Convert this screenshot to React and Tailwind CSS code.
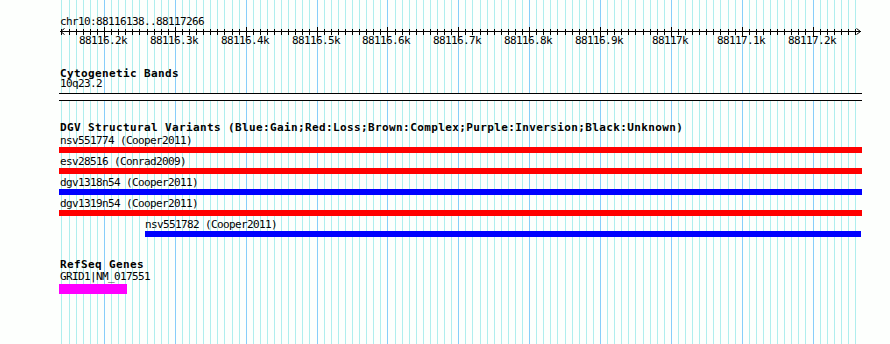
import React from "react";

const SCALE = 0.708571;
const col = (p) => Math.round(104 + (p - 88116200) * SCALE);

const gridPositions = [];
for (let p = 88116140; p <= 88117260; p += 10) gridPositions.push(p);

const majorLabels = [
  [88116200, "88116.2k"],
  [88116300, "88116.3k"],
  [88116400, "88116.4k"],
  [88116500, "88116.5k"],
  [88116600, "88116.6k"],
  [88116700, "88116.7k"],
  [88116800, "88116.8k"],
  [88116900, "88116.9k"],
  [88117000, "88117k"],
  [88117100, "88117.1k"],
  [88117200, "88117.2k"],
];

const MONO = "font-['DejaVu_Sans_Mono','Liberation_Mono',monospace]";

function Grid() {
  return (
    <svg
      className="absolute inset-0"
      width="890"
      height="344"
      viewBox="0 0 890 344"
      shapeRendering="crispEdges"
    >
      {gridPositions.map((p) => {
        const x = col(p) + 0.5;
        const major = p % 100 === 0;
        return (
          <line
            key={p}
            x1={x}
            x2={x}
            y1={0}
            y2={344}
            stroke={major ? "#87cefa" : "#afeeee"}
            strokeWidth="1"
          />
        );
      })}
    </svg>
  );
}

function Ruler() {
  // svg top is at page y=27
  return (
    <svg width="890" height="20" viewBox="0 0 890 20" className="block">
      <g shapeRendering="crispEdges" stroke="#000" strokeWidth="1">
        <line x1="60" x2="861" y1="4.5" y2="4.5" />
        {gridPositions.map((p) => {
          const x = col(p) + 0.5;
          const major = p % 100 === 0;
          return (
            <line
              key={p}
              x1={x}
              x2={x}
              y1={major ? 0 : 2}
              y2={major ? 10 : 8}
            />
          );
        })}
      </g>
      <g stroke="#000" strokeWidth="1" fill="none">
        <polyline points="64.5,1.5 60.5,4.5 64.5,7.5" />
        <polyline points="856.5,1.5 860.5,4.5 856.5,7.5" />
      </g>
      {majorLabels.map(([p, t]) => (
        <text
          key={p}
          x={col(p) - 1}
          y="16.8"
          textAnchor="middle"
          fontFamily="'DejaVu Sans Mono','Liberation Mono',monospace"
          fontSize="11"
          letterSpacing="-0.62"
          fill="#000"
        >
          {t}
        </text>
      ))}
    </svg>
  );
}

function Label({ children, className = "", bold = false }) {
  return (
    <div
      className={`relative z-10 h-[9px] leading-[9px] text-[11px] whitespace-nowrap text-black ${MONO} ${
        bold ? "font-bold tracking-[0.38px]" : "tracking-[-0.62px]"
      } ${className}`}
    >
      {children}
    </div>
  );
}

const variants = [
  { name: "nsv551774 (Cooper2011)", color: "bg-[#ff0000]", ml: "ml-[59px]", w: "w-[803px]", pl: "pl-[60px]" },
  { name: "esv28516 (Conrad2009)", color: "bg-[#ff0000]", ml: "ml-[59px]", w: "w-[803px]", pl: "pl-[60px]" },
  { name: "dgv1318n54 (Cooper2011)", color: "bg-[#0000ff]", ml: "ml-[59px]", w: "w-[803px]", pl: "pl-[60px]" },
  { name: "dgv1319n54 (Cooper2011)", color: "bg-[#ff0000]", ml: "ml-[59px]", w: "w-[803px]", pl: "pl-[60px]" },
  { name: "nsv551782 (Cooper2011)", color: "bg-[#0000ff]", ml: "ml-[145px]", w: "w-[716px]", pl: "pl-[145px]" },
];

export default function App() {
  return (
    <div className="relative w-[890px] h-[344px] overflow-hidden bg-[#fdfffd]">
      <Grid />
      <div className="relative flex flex-col">
        <Label className="mt-[17px] pl-[60px]">chr10:88116138..88117266</Label>
        <div className="mt-[1px]">
          <Ruler />
        </div>

        <Label bold className="mt-[22px] pl-[60px]">Cytogenetic Bands</Label>
        <Label className="mt-[1px] pl-[60px]">10q23.2</Label>
        <div className="mt-[5px] ml-[59px] w-[803px] h-[8px] border-y border-black bg-white" />

        <Label bold className="mt-[22px] pl-[60px]">
          DGV Structural Variants (Blue:Gain;Red:Loss;Brown:Complex;Purple:Inversion;Black:Unknown)
        </Label>
        {variants.map((v) => (
          <div key={v.name} className="flex flex-col">
            <Label className={`mt-[4px] ${v.pl}`}>{v.name}</Label>
            <div className={`mt-[2px] h-[6px] ${v.ml} ${v.w} ${v.color}`} />
          </div>
        ))}

        <Label bold className="mt-[23px] pl-[60px]">RefSeq Genes</Label>
        <Label className="mt-[3px] pl-[60px]">GRID1|NM_017551</Label>
        <div className="mt-[3px] ml-[59px] w-[68px] h-[10px] bg-[#ff00ff]" />
      </div>
    </div>
  );
}
